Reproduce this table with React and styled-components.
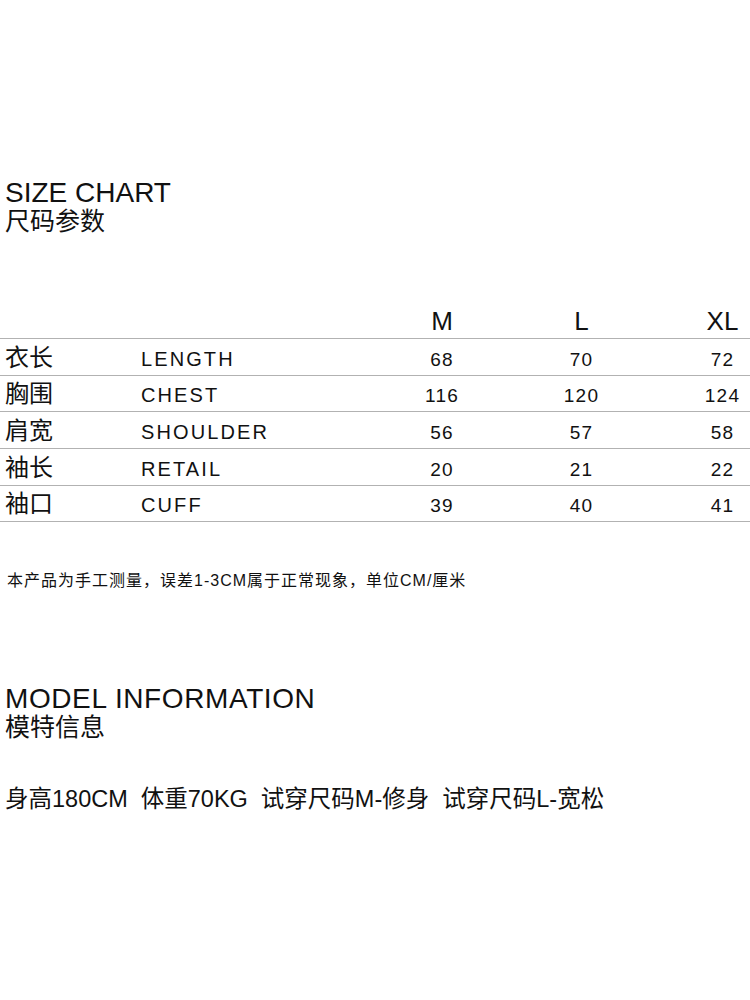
import styled, { createGlobalStyle } from "styled-components";

const sizes = ["M", "L", "XL"];

const rows = [
  { cn: "衣长", en: "LENGTH", values: [68, 70, 72], h: 37 },
  { cn: "胸围", en: "CHEST", values: [116, 120, 124], h: 36 },
  { cn: "肩宽", en: "SHOULDER", values: [56, 57, 58], h: 37 },
  { cn: "袖长", en: "RETAIL", values: [20, 21, 22], h: 37 },
  { cn: "袖口", en: "CUFF", values: [39, 40, 41], h: 36 },
];

export default function App() {
  return (
    <>
      <GlobalStyle />
      <Page>
        <Heading>
          <Title>SIZE CHART</Title>
          <Subtitle>尺码参数</Subtitle>
        </Heading>

        <Table>
          <HeaderRow>
            <span />
            <span />
            {sizes.map((s) => (
              <SizeHead key={s}>{s}</SizeHead>
            ))}
          </HeaderRow>
          {rows.map((r) => (
            <Row key={r.en} $h={r.h}>
              <CnLabel>{r.cn}</CnLabel>
              <EnLabel>{r.en}</EnLabel>
              {r.values.map((v, i) => (
                <Value key={i}>{v}</Value>
              ))}
            </Row>
          ))}
        </Table>

        <Note>本产品为手工测量，误差1-3CM属于正常现象，单位CM/厘米</Note>

        <Heading $top={96}>
          <Title $spacing={0.6}>MODEL INFORMATION</Title>
          <Subtitle>模特信息</Subtitle>
        </Heading>

        <ModelLine>
          <span>身高180CM</span>
          <span>体重70KG</span>
          <span>试穿尺码M-修身</span>
          <span>试穿尺码L-宽松</span>
        </ModelLine>
      </Page>
    </>
  );
}

const GlobalStyle = createGlobalStyle`
  html, body {
    margin: 0;
    padding: 0;
    background: #ffffff;
  }
  body {
    font-family: "Liberation Sans", "Noto Sans CJK SC", sans-serif;
    color: #111111;
  }
`;

const Page = styled.div`
  width: 750px;
  height: 1000px;
  padding-top: 179px;
  box-sizing: border-box;
  overflow: hidden;
`;

const Heading = styled.div`
  display: flex;
  flex-direction: column;
  padding-left: 5px;
  margin-top: ${(p) => (p.$top ? `${p.$top}px` : "0")};
`;

const Title = styled.div`
  font-size: 28px;
  line-height: 28px;
  letter-spacing: ${(p) => p.$spacing || 0}px;
  white-space: nowrap;
`;

const Subtitle = styled.div`
  margin-top: 2px;
  font-size: 25px;
  line-height: 1;
`;

const Table = styled.div`
  margin-top: 67px;
  display: flex;
  flex-direction: column;
`;

const grid = `
  display: grid;
  grid-template-columns: 141px 275px 52px 227px 55px;
  align-items: end;
  box-sizing: border-box;
  border-bottom: 1px solid #b2b2b2;
`;

const HeaderRow = styled.div`
  ${grid}
  height: 38px;
`;

const SizeHead = styled.div`
  font-size: 26px;
  line-height: 1;
  padding-bottom: 4px;
  white-space: nowrap;
  justify-self: center;
`;

const Row = styled.div`
  ${grid}
  height: ${(p) => p.$h}px;
`;

const CnLabel = styled.div`
  font-size: 24px;
  line-height: 1;
  padding-left: 5px;
  padding-bottom: 5px;
`;

const EnLabel = styled.div`
  font-size: 20px;
  line-height: 1;
  letter-spacing: 2.1px;
  padding-bottom: 6px;
`;

const Value = styled.div`
  font-size: 19px;
  line-height: 1;
  letter-spacing: 1.2px;
  padding-bottom: 6px;
  justify-self: center;
  white-space: nowrap;
`;

const Note = styled.div`
  margin-top: 51px;
  padding-left: 7px;
  font-size: 16px;
  line-height: 1;
  letter-spacing: 1px;
  white-space: nowrap;
`;

const ModelLine = styled.div`
  margin-top: 48px;
  padding-left: 5px;
  display: flex;
  gap: 13px;
  font-size: 23.5px;
  line-height: 1;
  white-space: nowrap;
`;
